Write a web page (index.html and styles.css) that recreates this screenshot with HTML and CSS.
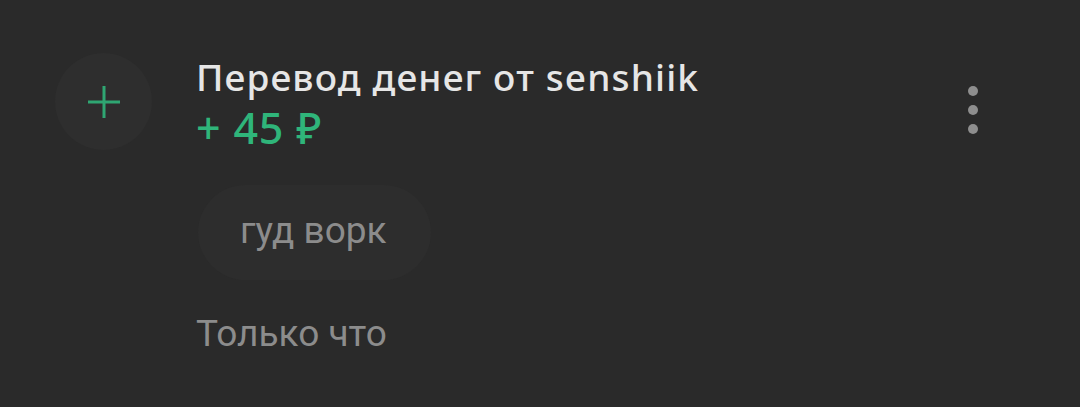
FILE: index.html
```html
<!DOCTYPE html>
<html lang="ru">
<head>
<meta charset="utf-8">
<link rel="stylesheet" href="styles.css">
</head>
<body>
<div class="item">
  <div class="avatar">
    <svg width="34" height="34" viewBox="0 0 34 34"><path d="M17 1V33M1 17H33" stroke="#2fa672" stroke-width="3" fill="none"/></svg>
  </div>
  <div class="content">
    <div class="title">Перевод денег от senshiik</div>
    <div class="amount">+ 45 ₽</div>
    <div class="bubble">гуд ворк</div>
    <div class="time">Только что</div>
  </div>
  <div class="menu">
    <span class="dot"></span><span class="dot"></span><span class="dot"></span>
  </div>
</div>
</body>
</html>
```
FILE: styles.css
```css
html, body {
  margin: 0;
  padding: 0;
  background: #2a2a2a;
  width: 1080px;
  height: 407px;
  overflow: hidden;
}
.item {
  display: flex;
  align-items: flex-start;
  padding: 53px 0 0 55px;
}
.avatar {
  width: 97px;
  height: 97px;
  border-radius: 50%;
  background: #2e2e2e;
  display: flex;
  align-items: center;
  justify-content: center;
  flex-shrink: 0;
}
.content {
  margin-left: 44px;
  flex: 1;
  display: flex;
  flex-direction: column;
  align-items: flex-start;
}
.title {
  font-family: "Noto Sans", sans-serif;
  font-weight: 500;
  font-size: 37px;
  line-height: 48px;
  letter-spacing: 1.15px;
  color: #e6e6e6;
}
.amount {
  font-family: "Noto Sans", sans-serif;
  font-weight: 500;
  font-size: 43px;
  line-height: 54px;
  letter-spacing: 0.8px;
  color: #2fb57a;
}
.bubble {
  margin-top: 30px;
  margin-left: 2px;
  background: #2d2d2d;
  border-radius: 48px;
  padding: 22px 44px 25px 42px;
  font-family: Roboto, sans-serif;
  font-size: 37px;
  line-height: 48px;
  color: #8c8c8c;
}
.time {
  margin-top: 32px;
  font-family: Roboto, sans-serif;
  font-size: 37px;
  line-height: 44px;
  color: #8c8c8c;
}
.menu {
  width: 12px;
  margin: 33px 101px 0 0;
  display: flex;
  flex-direction: column;
  gap: 9px;
  align-items: center;
}
.dot {
  width: 10px;
  height: 10px;
  border-radius: 50%;
  background: #8e8e8e;
}
```
